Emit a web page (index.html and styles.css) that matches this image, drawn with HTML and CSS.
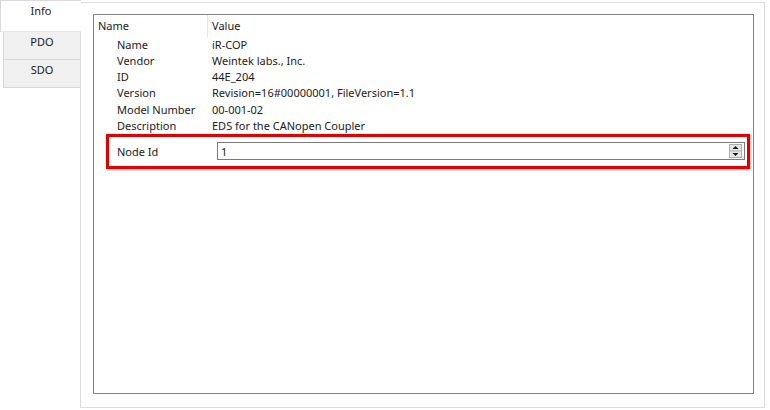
FILE: index.html
```html
<!DOCTYPE html>
<html>
<head>
<meta charset="utf-8">
<link rel="stylesheet" href="styles.css">
</head>
<body>
<div class="widget">
  <div class="tabbar">
    <div class="tab active">Info</div>
    <div class="tab">PDO</div>
    <div class="tab">SDO</div>
    <div class="filler"></div>
  </div>
  <div class="page">
    <div class="table">
      <div class="header">
        <div class="hcell hname">Name</div>
        <div class="hcell hvalue">Value</div>
      </div>
      <div class="row"><span class="label">Name</span><span class="value">iR-COP</span></div>
      <div class="row"><span class="label">Vendor</span><span class="value">Weintek labs., Inc.</span></div>
      <div class="row"><span class="label">ID</span><span class="value">44E_204</span></div>
      <div class="row"><span class="label">Version</span><span class="value">Revision=16#00000001, FileVersion=1.1</span></div>
      <div class="row"><span class="label">Model Number</span><span class="value">00-001-02</span></div>
      <div class="row"><span class="label">Description</span><span class="value">EDS for the CANopen Coupler</span></div>
      <div class="highlight">
        <span class="label nlabel">Node Id</span>
        <div class="spin">
          <span class="spin-text">1</span>
          <div class="spin-btns">
            <svg width="13" height="14" viewBox="0 0 13 14">
              <rect x="0.5" y="0.5" width="12" height="13" fill="#e6e6e6" stroke="#adadad"/>
              <line x1="1" y1="7" x2="12" y2="7" stroke="#adadad"/>
              <path d="M3.5 5 L6.5 2 L9.5 5 Z" fill="#1a1a1a"/>
              <path d="M3.5 9 L6.5 12 L9.5 9 Z" fill="#1a1a1a"/>
            </svg>
          </div>
        </div>
      </div>
    </div>
  </div>
</div>
</body>
</html>
```

FILE: styles.css
```css
html, body {
  margin: 0;
  padding: 0;
  background: #ffffff;
}
body {
  font-family: "Noto Sans", "Open Sans", sans-serif;
  font-size: 11px;
  color: #1a1a1a;
}
.widget {
  display: flex;
  width: 765px;
  height: 408px;
}
.tabbar {
  display: flex;
  flex-direction: column;
  width: 81px;
  flex: 0 0 81px;
}
.tab {
  box-sizing: border-box;
  height: 28px;
  margin-left: 3px;
  background: #f0f0f0;
  border: 1px solid #d9d9d9;
  border-top: none;
  display: flex;
  justify-content: center;
  align-items: flex-start;
  padding-top: 2px;
}
.tab.active {
  height: 32px;
  margin-left: 0;
  background: #ffffff;
  border: 1px solid #d9d9d9;
  border-right: none;
  border-bottom-color: #e6e6e6;
  padding-top: 2px;
}
.filler {
  flex: 1;
  border-right: 1px solid #dcdcdc;
}
.page {
  box-sizing: border-box;
  margin-top: 2px;
  width: 684px;
  height: 406px;
  border: 1px solid #dcdcdc;
  border-left: none;
  padding: 11px 10px 13px 12px;
  display: flex;
}
.table {
  flex: 1;
  border: 1px solid #828282;
  background: #ffffff;
  display: flex;
  flex-direction: column;
}
.header {
  display: flex;
  height: 22px;
  align-items: center;
}
.hcell {
  height: 22px;
  line-height: 21px;
  box-sizing: border-box;
}
.hname {
  width: 114px;
  padding-left: 4px;
  border-right: 1px solid #e5e5e5;
}
.hvalue {
  padding-left: 4px;
}
.row {
  display: flex;
  height: 16.15px;
  line-height: 16px;
  padding-left: 23px;
}
.label {
  width: 95px;
  flex: 0 0 95px;
}
.highlight {
  display: flex;
  align-items: center;
  margin: 0 3px 0 12px;
  border: 3px solid #e00000;
  box-shadow: 1px 1px 2px rgba(0, 0, 0, 0.35);
  height: 29px;
  box-sizing: content-box;
  padding: 0 2px 0 8px;
}
.nlabel {
  width: 100px;
  flex: 0 0 100px;
}
.spin {
  flex: 1;
  height: 18px;
  box-sizing: border-box;
  border: 1px solid #7a7a7a;
  display: flex;
  align-items: center;
  justify-content: space-between;
  padding-left: 3px;
  padding-right: 2px;
}
.spin-btns {
  display: flex;
  align-items: center;
}
.spin-btns svg {
  display: block;
}
```
